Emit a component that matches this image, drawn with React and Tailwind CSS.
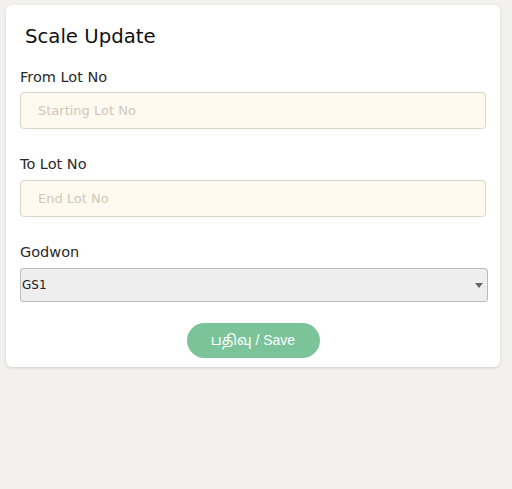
export default function App() {
  return (
    <div className="min-h-[489px] bg-[#f3f1ed] px-[6px] pt-[5px]" style={{ fontFamily: '"DejaVu Sans", Verdana, sans-serif' }}>
      <div className="w-[494px] rounded-[6px] bg-white px-[14px] pb-[9px] pt-[20px] shadow-[0_1px_3px_rgba(0,0,0,0.15)]">
        <h1 className="pl-[5px] text-[19.7px] leading-[24px] text-[#111]">Scale Update</h1>

        <label className="mt-[20px] block text-[14.5px] leading-[17px] text-[#2a2a2a]">From Lot No</label>
        <input
          placeholder="Starting Lot No"
          className="mt-[6px] block h-[37px] w-[466px] rounded-[4px] border border-[#dcd5c8] bg-[#fffaf0] px-[17px] text-[13px] outline-none placeholder:text-[#cfc7b8]"
        />

        <label className="mt-[27px] block text-[14.5px] leading-[17px] text-[#2a2a2a]">To Lot No</label>
        <input
          placeholder="End Lot No"
          className="mt-[7px] block h-[37px] w-[466px] rounded-[4px] border border-[#dcd5c8] bg-[#fffaf0] px-[17px] text-[13px] outline-none placeholder:text-[#cfc7b8]"
        />

        <label className="mt-[27px] block text-[14.5px] leading-[17px] text-[#2a2a2a]">Godwon</label>
        <div className="relative mt-[7px] w-[468px]">
          <select className="block h-[34px] w-full appearance-none rounded-[3px] border border-[#bcbcbc] bg-[#eeeeee] pl-[1px] text-[12px] text-[#222] outline-none">
            <option>GS1</option>
          </select>
          <span className="pointer-events-none absolute right-[5px] top-[15px] h-0 w-0 border-x-[4px] border-t-[5px] border-x-transparent border-t-[#666]" />
        </div>

        <div className="mt-[21px] flex justify-center">
          <button
            className="h-[35px] w-[133px] rounded-full bg-[#7bc49a] text-[14px] text-white"
            style={{ fontFamily: '"Liberation Sans", "Noto Sans Tamil", "Lohit Tamil", "FreeSans", sans-serif' }}
          >
            பதிவு / Save
          </button>
        </div>
      </div>
    </div>
  )
}
